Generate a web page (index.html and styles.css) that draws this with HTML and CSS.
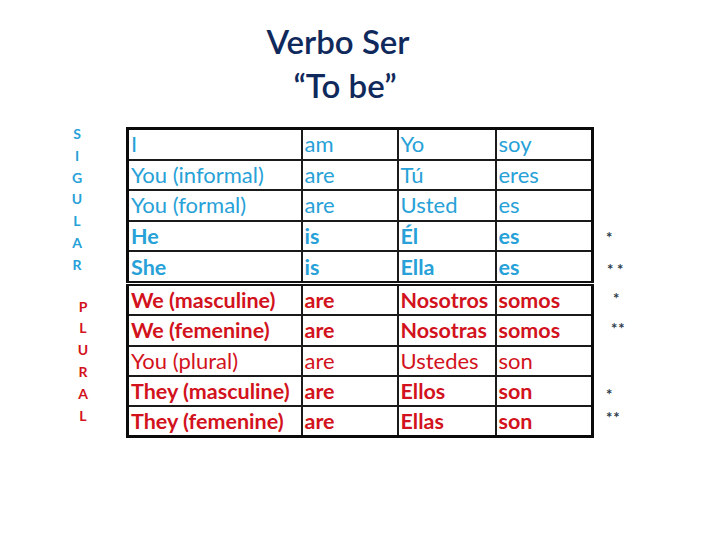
FILE: index.html
```html
<!DOCTYPE html>
<html lang="es">
<head>
<meta charset="utf-8">
<title>Verbo Ser</title>
<link rel="stylesheet" href="styles.css">
</head>
<body>
<header class="title">
  <div class="title-line">Verbo Ser</div>
  <div class="title-line sub">“To be”</div>
</header>
<main class="layout">
  <div class="labels">
    <div class="stack singular">
      <span>S</span><span>I</span><span>G</span><span>U</span><span>L</span><span>A</span><span>R</span>
    </div>
    <div class="stack plural">
      <span>P</span><span>L</span><span>U</span><span>R</span><span>A</span><span>L</span>
    </div>
  </div>
  <table class="verbs">
    <colgroup>
      <col class="c1"><col class="c2"><col class="c3"><col class="c4">
    </colgroup>
    <tbody class="sg">
      <tr><td>I</td><td>am</td><td>Yo</td><td>soy</td></tr>
      <tr><td>You (informal)</td><td>are</td><td>Tú</td><td>eres</td></tr>
      <tr><td>You (formal)</td><td>are</td><td>Usted</td><td>es</td></tr>
      <tr class="b"><td>He</td><td>is</td><td>Él</td><td>es</td></tr>
      <tr class="b"><td>She</td><td>is</td><td>Ella</td><td>es</td></tr>
    </tbody>
    <tbody class="pl">
      <tr class="b first"><td>We (masculine)</td><td>are</td><td>Nosotros</td><td>somos</td></tr>
      <tr class="b"><td>We (femenine)</td><td>are</td><td>Nosotras</td><td>somos</td></tr>
      <tr><td>You (plural)</td><td>are</td><td>Ustedes</td><td>son</td></tr>
      <tr class="b"><td>They (masculine)</td><td>are</td><td>Ellos</td><td>son</td></tr>
      <tr class="b"><td>They (femenine)</td><td>are</td><td>Ellas</td><td>son</td></tr>
    </tbody>
  </table>
  <div class="notes">
    <span class="n n1">*</span>
    <span class="n n2">* *</span>
    <span class="n n3">*</span>
    <span class="n n4">**</span>
    <span class="n n5">*</span>
    <span class="n n6">**</span>
  </div>
</main>
</body>
</html>
```
FILE: styles.css
```css
html, body {
  margin: 0;
  padding: 0;
  background: #ffffff;
}
body {
  width: 720px;
  height: 540px;
  font-family: Lato, "Open Sans", sans-serif;
  overflow: hidden;
}
.title {
  padding: 20px 44px 0 0;
  text-align: center;
  color: #10295c;
  font-size: 33px;
  font-weight: 600;
  line-height: 42px;
}
.title .sub {
  padding-left: 14px;
  margin-top: 2px;
}
.layout {
  display: grid;
  grid-template-columns: 126px 465px 1fr;
  margin-top: 21px;
}
.labels {
  display: flex;
  flex-direction: column;
  font-weight: 700;
  font-size: 14px;
  line-height: 21.8px;
}
.stack {
  display: flex;
  flex-direction: column;
  align-items: center;
}
.singular {
  color: #27a1d7;
  width: 154px;
  margin-top: -4px;
}
.plural {
  color: #d2121c;
  width: 166px;
  margin-top: 20px;
}
.verbs {
  border-collapse: collapse;
  table-layout: fixed;
  width: 465px;
  border: 3px solid #0a0a0a;
  font-size: 22px;
}
.c1 { width: 174px; }
.c2 { width: 96px; }
.c3 { width: 98px; }
.c4 { width: 97px; }
.verbs td {
  border: 2px solid #1a1a1a;
  padding: 0 0 0 2px;
  height: 28.6px;
  line-height: 26px;
  white-space: nowrap;
  overflow: hidden;
}
.sg td { color: #27a1d7; }
.pl td { color: #d2121c; }
.pl td { height: 28.3px; }
.b td { font-weight: 700; font-size: 21.5px; }
.pl .first td {
  border-top: 5px double #111111;
}
.notes {
  display: flex;
  flex-direction: column;
  color: #2b3a4a;
  font-size: 15px;
  line-height: 10px;
  font-weight: 700;
}
.n { display: block; height: 10px; }
.n1 { margin: 105px 0 0 15px; }
.n2 { margin: 22px 0 0 16px; }
.n3 { margin: 19px 0 0 22px; }
.n4 { margin: 20px 0 0 20px; letter-spacing: 1px; }
.n5 { margin: 56px 0 0 15px; }
.n6 { margin: 13px 0 0 15px; letter-spacing: 1px; }
```
